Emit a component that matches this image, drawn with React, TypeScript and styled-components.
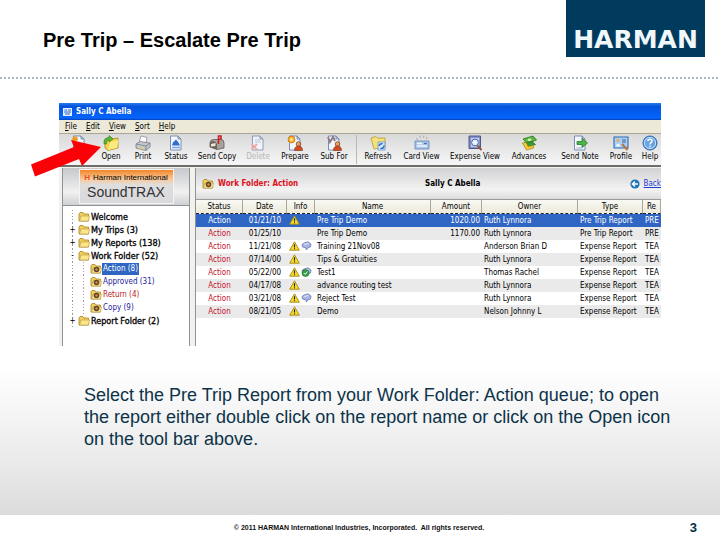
import React from 'react';
import styled, { createGlobalStyle } from 'styled-components';

const GlobalStyle = createGlobalStyle`
  * { box-sizing: border-box; }
  body { margin: 0; background: #fff; font-family: "Liberation Sans", Arial, sans-serif; }
  button { font: inherit; color: inherit; border: 0; padding: 0; background: none; cursor: pointer; }
`;

const Slide = styled.div`
  min-height: 100vh;
  display: flex;
  flex-direction: column;
  background: #fff;
`;

const Header = styled.header`
  display: flex;
  justify-content: space-between;
  align-items: flex-start;
  height: 79px;
  padding: 0 15px 0 43px;
  background: repeating-linear-gradient(90deg, #a9bac6 0 2px, #fff 2px 4px) bottom / 100% 2px no-repeat;
`;

const SlideTitle = styled.h1`
  margin: 28px 0 0;
  font-size: 20px;
  line-height: 24px;
  font-weight: 700;
  color: #000;
`;

const Logo = styled.div`
  display: flex;
  align-items: flex-end;
  justify-content: center;
  width: 139px;
  height: 57px;
  padding-bottom: 3px;
  background: #003a5d;
  color: #f0f8fc;
  font: 700 25px/28px "DejaVu Sans", sans-serif;
`;

const Body = styled.main`
  flex: 1;
  display: flex;
  flex-direction: column;
  padding: 24px 0 40px;
  background: linear-gradient(#fff 66%, #ececec 86%, #dcdcdc);
`;

const Figure = styled.div`
  position: relative;
  margin: 0 59px;
`;

const AppWindow = styled.section`
  overflow: hidden;
  background: #fff;
  color: #000;
  font: 9px/13px "DejaVu Sans Condensed", "DejaVu Sans", sans-serif;
`;

const TitleBar = styled.div`
  display: flex;
  align-items: center;
  gap: 4px;
  height: 17px;
  padding-left: 4px;
  background: linear-gradient(#2a7cf0, #0453dd 20%, #0460f6 70%, #0565ff 88%, #0340b8);
  color: #fff;
  font-weight: 700;
  font-size: 8px;
`;

const MenuBar = styled.nav`
  display: flex;
  gap: 9px;
  height: 14px;
  padding-left: 6px;
  background: #ece9d8;
  border-bottom: 1px solid #aaa797;
  font-size: 8px;
  u { text-decoration: underline; }
`;

const ToolBar = styled.div`
  display: flex;
  height: 33px;
  padding-left: 3px;
  overflow: hidden;
  background: linear-gradient(#d9d9da, #f4f4f4 92%);
  border-bottom: 2px solid #6d6d6d;
`;

const Tool = styled.button<{ $w: number }>`
  flex: none;
  display: flex;
  flex-direction: column;
  align-items: center;
  width: ${(p) => p.$w}px;
  padding-top: 1px;
  font-size: 8px;
  line-height: 12px;
  white-space: nowrap;
  &:disabled { color: #aaa; opacity: 0.8; }
  svg { flex: none; }
`;

const Separator = styled.span`
  flex: none;
  width: 1px;
  margin: 1px 3px;
  background: #b9b9a9;
`;

const Panes = styled.div`
  display: flex;
  gap: 5px;
  height: 179px;
  padding: 1px 0 0 3px;
  background: #f3f1ea;
`;

const SidePane = styled.aside`
  flex: none;
  width: 128px;
  background: #fff;
  border: solid #8c929a;
  border-width: 0 1px;
`;

const BrandBar = styled.div`
  display: flex;
  justify-content: center;
  height: 38px;
  padding: 1px 0 2px;
  background: linear-gradient(#c6c8cb, #f1f1f1 65%, #cfd0d2);
  border-bottom: 1px solid #8c929a;
`;

const Brand = styled.div`
  width: 95px;
  height: 35px;
  padding-top: 2px;
  border: 1px solid #f6f2ee;
  background: linear-gradient(#f0862a, #f9c99a 28%, #dedede 45%, #d9d9dc);
  text-align: center;
  font: 8px/12px "Liberation Sans", Arial, sans-serif;
  white-space: nowrap;
  strong { color: #e8501a; margin-right: 3px; }
  b { font-weight: 400; }
  p { margin: 0; font-size: 14px; line-height: 17px; color: #333; }
`;

const Tree = styled.ul`
  list-style: none;
  margin: 0;
  padding: 4px 0 0 4px;
`;

const Node = styled.li<{ $child?: boolean; $color?: string; $selected?: boolean }>`
  display: flex;
  align-items: center;
  height: 13px;
  padding-left: ${(p) => (p.$child ? 12 : 0)}px;
  background: ${(p) =>
    p.$child
      ? 'repeating-linear-gradient(#c78fa0 0 1px, transparent 1px 3px) 16px 0 / 1px 100% no-repeat, repeating-linear-gradient(#999 0 1px, transparent 1px 3px) 5px 0 / 1px 100% no-repeat'
      : 'repeating-linear-gradient(#999 0 1px, transparent 1px 3px) 5px 0 / 1px 100% no-repeat'};
  svg { flex: none; }
  button {
    font-size: ${(p) => (p.$child ? 8 : 9)}px;
    line-height: 12px;
    padding: 0 1px;
    white-space: nowrap;
    color: ${(p) => (p.$selected ? '#fff' : p.$color ?? '#000')};
    background: ${(p) => (p.$selected ? '#2f66c4' : 'transparent')};
    -webkit-text-stroke: ${(p) => (p.$child ? '0' : '0.3px #000')};
  }
`;

const Toggle = styled.span`
  flex: none;
  width: 11px;
  font-size: 8px;
  line-height: 12px;
  text-align: center;
`;

const MainPane = styled.div`
  flex: 1;
  min-width: 0;
  overflow: hidden;
  background: #fff;
  border-left: 1px solid #8c929a;
`;

const PaneHeader = styled.div`
  display: grid;
  grid-template-columns: 223px 1fr auto;
  align-items: center;
  height: 32px;
  padding-left: 6px;
  background: linear-gradient(#d2d2d4, #f3f3f3 70%, #dcdcdd);
  border-bottom: 1px solid #9a9a9a;
  font-size: 8px;
  font-weight: 700;
  span { display: flex; align-items: center; gap: 4px; white-space: nowrap; }
  a { font-weight: 400; color: #1a3fd0; }
`;

const FolderName = styled.span`
  color: #dd1122;
`;

const Grid = styled.table`
  width: 100%;
  table-layout: fixed;
  border-collapse: separate;
  border-spacing: 0;
  font-size: 8px;
  th {
    height: 14px;
    padding: 0;
    font-weight: 400;
    line-height: 12px;
    background: linear-gradient(#fafaf6, #ece9d8);
    border-right: 1px solid #aaa797;
    border-bottom: 1px dashed #223;
  }
  th, td { overflow: hidden; white-space: nowrap; }
  td { height: 13px; padding: 0 2px; line-height: 12px; }
  td:nth-child(1) { text-align: center; }
  td:nth-child(2) { text-align: center; }
  td:nth-child(5) { text-align: right; }
  svg { vertical-align: middle; margin-right: 1px; }
`;

const Row = styled.tr<{ $selected?: boolean }>`
  color: ${(p) => (p.$selected ? '#fff' : '#000')};
  background: ${(p) => (p.$selected ? '#2f66c4' : 'transparent')};
  &:nth-child(even) { background: #eaeaea; }
  td:first-child { color: ${(p) => (p.$selected ? '#fff' : '#c4122a')}; }
`;

const Arrow = styled.svg`
  position: absolute;
  left: -29px;
  top: 30px;
`;

const Caption = styled.p`
  margin: 38px 46px 0 84px;
  font-size: 18px;
  line-height: 22px;
  color: #0d3349;
`;

const Footer = styled.footer`
  display: grid;
  grid-template-columns: 1fr auto 1fr;
  align-items: center;
  height: 25px;
  padding: 0 23px 0 21px;
  color: #111;
  font-weight: 700;
  font-size: 7px;
  white-space: pre;
  b { justify-self: end; font-size: 13px; color: #003049; }
`;

const FolderIcon = ({ badge }: { badge?: boolean }) => (
  <svg width="12" height="12" viewBox="0 0 12 12">
    <path d="M1 3 L2 1.5 H5 L6 3 H10.5 V10 H1 Z" fill="#f0cf58" stroke="#a8842c" strokeWidth=".8" />
    <path d="M1.5 10 L3 5 H11.5 L10.5 10 Z" fill="#fbe68c" stroke="#b8933a" strokeWidth=".6" />
    {badge && (
      <>
        <circle cx="6.5" cy="6.5" r="2.8" fill="#5a4636" />
        <circle cx="6.5" cy="6.5" r="1.2" fill="#e08a3a" />
      </>
    )}
  </svg>
);

const Warning = () => (
  <svg width="11" height="10" viewBox="0 0 11 10">
    <path d="M5.5 .8 L10.3 9.2 H.7 Z" fill="#f8dc28" stroke="#a08818" strokeWidth=".9" strokeLinejoin="round" />
    <path d="M5.5 3.2 V6.4 M5.5 7.2 V8.3" stroke="#222" strokeWidth="1.1" />
  </svg>
);

const Bubble = ({ green }: { green?: boolean }) => (
  <svg width="11" height="10" viewBox="0 0 11 10">
    <path d="M3 2 L7 .8 L10 3 L9.5 6 L6.5 7 L5.5 9 L4.8 6.8 L1.5 6 L1 3.5 Z" fill="#a9b4e2" stroke="#6b78b4" strokeWidth=".8" />
    <path d="M3 3.4 L7.5 2.6" stroke="#e6eafa" strokeWidth="1" />
    {green && <circle cx="4.5" cy="6" r="3.5" fill="#35a048" stroke="#1a6c2c" strokeWidth=".6" />}
    {green && <path d="M2.8 6 L4.2 7.4 L6.4 4.6" fill="none" stroke="#e8ffe8" strokeWidth="1" />}
  </svg>
);

const Doc = () => (
  <path d="M2.5 1 H10 L13 4 V15 H2.5 Z M10 1 V4 H13" fill="#f4f8fe" stroke="#6c83ad" strokeWidth=".9" />
);
const Person = () => (
  <>
    <circle cx="11.5" cy="9" r="2.3" fill="#e8a468" stroke="#7a3418" strokeWidth=".7" />
    <path d="M7.5 15.5 Q7.5 11 11.5 11 Q15.5 11 15.5 15.5 Z" fill="#cf4d20" stroke="#8c2e10" strokeWidth=".6" />
  </>
);

const art: Record<string, React.ReactNode> = {
  New: (
    <>
      <Doc />
      <path d="M4 1 V7 M1 4 H7 M2 2 L6 6 M6 2 L2 6" stroke="#f09a20" strokeWidth="1.3" />
    </>
  ),
  Open: (
    <>
      <path d="M2 4 L8 2 L9 4 L15 3 V13 L5 15.5 L2 13 Z" fill="#f4d34a" stroke="#b08a1c" strokeWidth=".8" />
      <path d="M5 15 L7 7 L15.5 5 L14 13 Z" fill="#fbea80" />
      <path d="M1 9 Q0 3 6 2.5 V.5 L10 4 L6 7 V5 Q3 5 3.5 9 Z" fill="#59b837" stroke="#2f7d1c" strokeWidth=".6" />
    </>
  ),
  Print: (
    <>
      <path d="M4 8 L6 1 L12 2.5 L11 8 Z" fill="#fff" stroke="#8b8f98" strokeWidth=".8" />
      <path d="M1 9 L5 6.5 L15 8 V12 L11 15.5 L1 13 Z" fill="#c3c7cf" stroke="#777b85" strokeWidth=".8" />
      <path d="M1 9 L11 11 L15 8 M11 11 V15" stroke="#777b85" strokeWidth=".8" fill="none" />
      <path d="M3 12.5 L9 14" stroke="#f0d360" strokeWidth="1.2" />
    </>
  ),
  Status: (
    <>
      <Doc />
      <path d="M8 4.5 L10.5 7.5 L12 10.5 H4 L5 7.5 Z" fill="#2d6fcf" />
      <path d="M4 12.5 H12" stroke="#7aa8e4" strokeWidth="1.6" />
    </>
  ),
  'Send Copy': (
    <>
      <path d="M1 8 Q1 4.5 4.5 4.5 H12 Q15 4.5 15 8 V13 L8 14.5 L1 12 Z" fill="#a8a29f" stroke="#5f5957" strokeWidth=".8" />
      <path d="M1 8 Q4.5 3.5 8 9 V14.5 L1 12 Z" fill="#6a6260" />
      <path d="M2 9 L6.5 8 V11 L2 11.5 Z" fill="#f4e6c8" />
      <path d="M9.5 9 V1 H12 V4 H10.5" stroke="#c82020" strokeWidth="1.6" fill="none" />
    </>
  ),
  Delete: (
    <>
      <Doc />
      <path d="M5 5 H10 M5 7 H11" stroke="#b8c2d4" />
      <path d="M1.5 9 L7 14.5 M7 9 L1.5 14.5" stroke="#ee9a92" strokeWidth="1.8" />
    </>
  ),
  Prepare: (
    <>
      <Doc />
      <circle cx="4.5" cy="4.5" r="3.4" fill="#f7b52c" stroke="#c66a14" strokeWidth=".8" />
      <circle cx="4.5" cy="4.5" r="1.2" fill="#fff2a8" />
      <Person />
    </>
  ),
  'Sub For': (
    <>
      <Doc />
      <path d="M2 2 L4 7 L7 2 L9 6" stroke="#8a7d84" strokeWidth="2" fill="none" />
      <Person />
    </>
  ),
  Refresh: (
    <>
      <path d="M1 3 L6 1.5 L7.5 3 H15 V12 L4 14 Z" fill="#f5e17a" stroke="#b59a38" strokeWidth=".8" />
      <path d="M8 7 H15 V15 H8 Z" fill="#d7e8fb" stroke="#5c87c0" strokeWidth=".7" />
      <path d="M9.3 11 Q9.5 8.3 12.5 8.8 M14 10.5 Q14 14 10.5 13.3" stroke="#2468c8" strokeWidth="1.5" fill="none" />
    </>
  ),
  'Card View': (
    <>
      <path d="M2 3 L4 5 M6 .5 V3 M10 .5 L9.5 3 M13.5 2 L12 4" stroke="#a9a9a4" />
      <path d="M1 6 H15 V14 H1 Z" fill="#aac6e8" stroke="#6684b0" strokeWidth=".8" />
      <path d="M3 8.5 H8 M3 11 H13" stroke="#f2f8ff" strokeWidth="1.3" />
      <path d="M10 8.5 H13" stroke="#4b76b0" strokeWidth="1.3" />
    </>
  ),
  'Expense View': (
    <>
      <path d="M2 1 H13.5 V13.5 H2 Z" fill="#8a90c8" stroke="#444a80" strokeWidth=".9" />
      <path d="M4 3 H12 V12 H4 Z" fill="#c4d0f0" />
      <circle cx="8" cy="7.5" r="3.4" fill="#e6f4ff" stroke="#456098" />
      <path d="M10.5 10.5 L14.5 15" stroke="#8e5b38" strokeWidth="2" />
    </>
  ),
  Advances: (
    <>
      <path d="M2 4 L12 1 L15.5 5 L6 8.5 Z" fill="#56b83c" stroke="#2b7420" strokeWidth=".8" />
      <ellipse cx="8.5" cy="4.8" rx="2" ry="1.2" fill="#d6f2b8" />
      <path d="M3 8 L11 6.5 L14.5 9.5 L6 12 Z" fill="#359c34" stroke="#226c20" strokeWidth=".7" />
      <path d="M1.5 8 L5 7.5 L7 11.5 L12.5 10.5 V13 L5.5 15 Z" fill="#f3cf3c" stroke="#b0841c" strokeWidth=".8" />
    </>
  ),
  'Send Note': (
    <>
      <Doc />
      <path d="M5 6.5 H10 V3.5 L15.5 8 L10 12.5 V9.5 H5 Z" fill="#4cb648" stroke="#217a25" strokeWidth=".8" />
      <path d="M4.5 13 H10" stroke="#96a6c2" />
    </>
  ),
  Profile: (
    <>
      <path d="M1 2 H15 V13 H1 Z" fill="#a9d0f6" stroke="#3469ae" strokeWidth="1.1" />
      <circle cx="5" cy="5.5" r="1.7" fill="#e9aa64" />
      <path d="M2.5 11.5 Q5 6 7.5 11.5 Z" fill="#f4f8ff" />
      <path d="M9 5 H13 M9 7 H13" stroke="#38618e" />
      <path d="M9 9 L14.5 15" stroke="#b97440" strokeWidth="2.2" />
    </>
  ),
  Help: (
    <>
      <circle cx="8" cy="8" r="7" fill="#68a4e2" stroke="#2a62a8" strokeWidth="1" />
      <circle cx="8" cy="8" r="5.6" fill="none" stroke="#dceeff" strokeWidth=".8" />
      <path d="M5.7 6.2 Q6 4 8.2 4.2 Q10.6 4.6 9.8 6.8 Q8 8 8 9.5 M8 10.8 V12.3" stroke="#fff" strokeWidth="1.5" fill="none" />
    </>
  ),
};

const tools: [string, number][] = [
  ['New', 33], ['Open', 32], ['Print', 32], ['Status', 34], ['Send Copy', 48], ['Delete', 34],
  ['Prepare', 40], ['Sub For', 38], ['|', 0], ['Refresh', 36], ['Card View', 51], ['Expense View', 56],
  ['Advances', 52], ['Send Note', 50], ['Profile', 32], ['Help', 26],
];

const menus = ['File', 'Edit', 'View', 'Sort', 'Help'];

const folders = [
  { name: 'Welcome' },
  { name: 'My Trips (3)', toggle: '+' },
  { name: 'My Reports (138)', toggle: '+' },
  { name: 'Work Folder (52)', toggle: '-' },
  { name: 'Action (8)', child: true, selected: true },
  { name: 'Approved (31)', child: true, color: '#1a1a9c' },
  { name: 'Return (4)', child: true, color: '#b81c28' },
  { name: 'Copy (9)', child: true, color: '#1a1a9c' },
  { name: 'Report Folder (2)', toggle: '+' },
];

const columns: [string, number | undefined][] = [
  ['Status', 47], ['Date', 44], ['Info', 28], ['Name', undefined], ['Amount', 51], ['Owner', 96], ['Type', 65], ['Re', 18],
];

const rows = [
  ['01/21/10', 'w', 'Pre Trip Demo', '1020.00', 'Ruth Lynnora', 'Pre Trip Report', 'PRE'],
  ['01/25/10', '', 'Pre Trip Demo', '1170.00', 'Ruth Lynnora', 'Pre Trip Report', 'PRE'],
  ['11/21/08', 'wb', 'Training 21Nov08', '', 'Anderson Brian D', 'Expense Report', 'TEA'],
  ['07/14/00', 'w', 'Tips & Gratuities', '', 'Ruth Lynnora', 'Expense Report', 'TEA'],
  ['05/22/00', 'wg', 'Test1', '', 'Thomas Rachel', 'Expense Report', 'TEA'],
  ['04/17/08', 'w', 'advance routing test', '', 'Ruth Lynnora', 'Expense Report', 'TEA'],
  ['03/21/08', 'wb', 'Reject Test', '', 'Ruth Lynnora', 'Expense Report', 'TEA'],
  ['08/21/05', 'w', 'Demo', '', 'Nelson Johnny L', 'Expense Report', 'TEA'],
];

export default function App() {
  return (
    <Slide>
      <GlobalStyle />
      <Header>
        <SlideTitle>Pre Trip – Escalate Pre Trip</SlideTitle>
        <Logo>HARMAN</Logo>
      </Header>
      <Body>
        <Figure>
          <AppWindow>
            <TitleBar>
              <svg width="9" height="10" viewBox="0 0 9 10">
                <path d="M0 1 H9 V9 H0 Z" fill="#e4efff" />
                <path d="M1.5 3 H4 M5 3 H8 M1 5 H8 M2 7 H7" stroke="#2a64c8" />
              </svg>
              Sally C Abella
            </TitleBar>
            <MenuBar>
              {menus.map((m) => (
                <button key={m}><u>{m[0]}</u>{m.slice(1)}</button>
              ))}
            </MenuBar>
            <ToolBar>
              {tools.map(([name, w]) =>
                name === '|' ? (
                  <Separator key={name} />
                ) : (
                  <Tool key={name} $w={w} disabled={name === 'Delete'}>
                    <svg width="16" height="16" viewBox="0 0 16 16">{art[name]}</svg>
                    {name}
                  </Tool>
                ),
              )}
            </ToolBar>
            <Panes>
              <SidePane>
                <BrandBar>
                  <Brand>
                    <strong>H</strong><b>Harman International</b>
                    <p>SoundTRAX</p>
                  </Brand>
                </BrandBar>
                <Tree>
                  {folders.map((f) => (
                    <Node key={f.name} $child={f.child} $color={f.color} $selected={f.selected}>
                      <Toggle>{f.toggle}</Toggle>
                      <FolderIcon badge={f.child} />
                      <button>{f.name}</button>
                    </Node>
                  ))}
                </Tree>
              </SidePane>
              <MainPane>
                <PaneHeader>
                  <FolderName><FolderIcon badge />Work Folder: Action</FolderName>
                  <span>Sally C Abella</span>
                  <span>
                    <svg width="10" height="10" viewBox="0 0 10 10">
                      <circle cx="5" cy="5" r="4.6" fill="#1c74b8" />
                      <path d="M8 5 H2.5 M5 2.4 L2.4 5 L5 7.6" stroke="#fff" strokeWidth="1.4" fill="none" />
                    </svg>
                    <a href="#back">Back</a>
                  </span>
                </PaneHeader>
                <Grid>
                  <colgroup>
                    {columns.map(([c, w]) => <col key={c} width={w} />)}
                  </colgroup>
                  <thead>
                    <tr>{columns.map(([c]) => <th key={c}>{c}</th>)}</tr>
                  </thead>
                  <tbody>
                    {rows.map(([date, info, ...rest], i) => (
                      <Row key={date} $selected={i === 0}>
                        <td>Action</td>
                        <td>{date}</td>
                        <td>
                          {info && <Warning />}
                          {info.length > 1 && <Bubble green={info === 'wg'} />}
                        </td>
                        {rest.map((t, j) => <td key={j}>{t}</td>)}
                      </Row>
                    ))}
                  </tbody>
                </Grid>
              </MainPane>
            </Panes>
          </AppWindow>
          <Arrow width="72" height="46" viewBox="0 0 72 46">
            <path d="M1 31.5 L44 14 L41 7 L71 14 L52 33 L49 26 L5 43.5 Z" fill="#fb0006" />
          </Arrow>
        </Figure>
        <Caption>
          Select the Pre Trip Report from your Work Folder: Action queue; to open the report either double
          click on the report name or click on the Open icon on the tool bar above.
        </Caption>
      </Body>
      <Footer>
        <span />
        <span>© 2011 HARMAN International Industries, Incorporated.  All rights reserved.</span>
        <b>3</b>
      </Footer>
    </Slide>
  );
}
